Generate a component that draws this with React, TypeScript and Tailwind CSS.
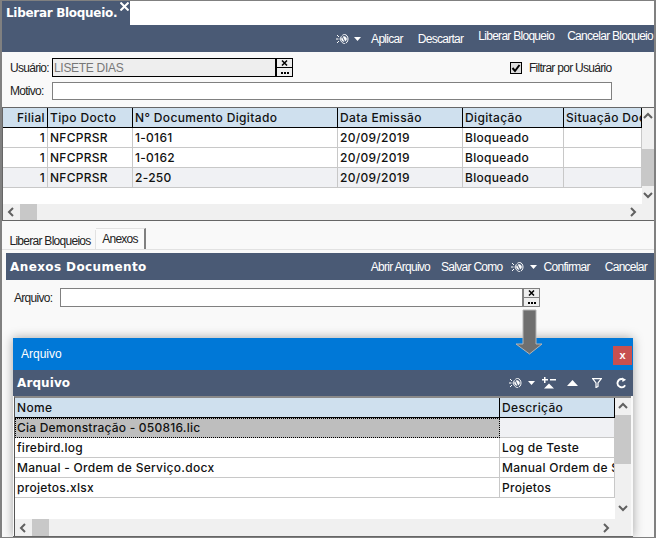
import type { ReactNode } from "react";

const SANS = "font-['Liberation_Sans',Arial,sans-serif]";
const TITLE = "font-['DejaVu_Sans',Verdana,sans-serif]";
const GRID = "font-['Inter',Verdana,sans-serif]";

function EyeIcon() {
  return (
    <svg width="13" height="12" viewBox="0 0 13 12" fill="none" stroke="white" strokeWidth="1">
      <path d="M0 6h2.500M1 2l2 2M1 10l2-2" />
      <path d="M4 6C5.500 2.500 7 1.500 8.500 1.500c2 0 3.500 2 3.500 4.500s-1.500 4.500-3.500 4.500C7 10.500 5.500 9.500 4 6z" />
      <circle cx="8" cy="6" r="2.300" fill="white" />
      <path d="M5 1l5 10" stroke="#4a5a75" />
    </svg>
  );
}

function Caret({ className = "" }: { className?: string }) {
  return (
    <svg width="7" height="4" viewBox="0 0 7 4" className={className}>
      <path d="M0 0h7L3.500 4z" fill="white" />
    </svg>
  );
}

function ToolText({ children, className = "" }: { children: ReactNode; className?: string }) {
  return <span className={`${SANS} text-[12px] tracking-[-0.72px] text-white whitespace-nowrap ${className}`}>{children}</span>;
}

function ClearButton({ border }: { border: string }) {
  return (
    <div className={`flex h-full w-[17px] shrink-0 flex-col border bg-[#eeeeee] ${border}`}>
      <div className={`flex h-1/2 items-center justify-center border-b ${border}`}>
        <svg width="7" height="6" viewBox="0 0 7 6" stroke="black" strokeWidth="1.500">
          <path d="M1 0.500l5 5M6 0.500l-5 5" />
        </svg>
      </div>
      <div className="flex flex-1 items-end justify-center gap-[1px] pb-[2px]">
        <i className="h-[2px] w-[2px] bg-black" />
        <i className="h-[2px] w-[2px] bg-black" />
        <i className="h-[2px] w-[2px] bg-black" />
      </div>
    </div>
  );
}

function Chevron({ dir }: { dir: "up" | "down" | "left" | "right" }) {
  const d = {
    up: "M1 6l4-4 4 4",
    down: "M1 2l4 4 4-4",
    left: "M6 1L2 5l4 4",
    right: "M3 1l4 4-4 4",
  }[dir];
  return (
    <svg width="10" height="10" viewBox="0 0 10 10" fill="none" stroke="#606060" strokeWidth="2">
      <path d={d} />
    </svg>
  );
}

const MAIN_COLS = "grid-cols-[45px_85px_205px_125px_101px_78px]";
const MAIN_HEAD = ["Filial", "Tipo Docto", "N° Documento Digitado", "Data Emissão", "Digitação", "Situação Docto"];
const MAIN_ROWS = [
  ["1", "NFCPRSR", "1-0161", "20/09/2019", "Bloqueado", ""],
  ["1", "NFCPRSR", "1-0162", "20/09/2019", "Bloqueado", ""],
  ["1", "NFCPRSR", "2-250", "20/09/2019", "Bloqueado", ""],
];

const FILE_ROWS = [
  ["firebird.log", "Log de Teste"],
  ["Manual - Ordem de Serviço.docx", "Manual Ordem de Serviço"],
  ["projetos.xlsx", "Projetos"],
];

function HeadCell({ children, right }: { children: ReactNode; right?: boolean }) {
  return (
    <div className={`${GRID} flex h-[20px] items-center overflow-hidden whitespace-nowrap border-r border-b border-r-black border-b-black bg-[#cfe0ee] px-[2px] text-[12px] font-medium tracking-[0.35px] text-[#111] ${right ? "justify-end" : ""}`}>
      {children}
    </div>
  );
}

function Cell({ children, right, className = "" }: { children?: ReactNode; right?: boolean; className?: string }) {
  return (
    <div className={`${GRID} flex h-[20px] items-center overflow-hidden whitespace-nowrap border-r border-b border-[#c8c8c8] px-[2px] text-[12px] font-medium tracking-[0.28px] text-[#111] ${right ? "justify-end" : ""} ${className}`}>
      {children}
    </div>
  );
}

export default function App() {
  return (
    <div className="relative flex h-[538px] w-[656px] flex-col overflow-hidden border-x-2 border-y border-x-[#808080] border-y-[#808080] bg-[#f9f9f9]">
      {/* aba superior */}
      <div className="flex h-[24px] shrink-0 bg-white">
        <div className={`${TITLE} relative flex w-[128px] items-center bg-[#4a5a75] pb-[1px] pl-[4px] text-[12px] font-bold tracking-[-0.3px] text-white`}>
          Liberar Bloqueio.
          <svg className="absolute right-[1px] top-[1px]" width="9" height="9" viewBox="0 0 9 9" stroke="white" strokeWidth="2">
            <path d="M0.500 0.500l8 8M8.500 0.500l-8 8" />
          </svg>
        </div>
      </div>
      <div className="flex h-[27px] shrink-0 items-center justify-end bg-[#4a5a75] pr-[1px]">
        <EyeIcon />
        <Caret className="ml-[5px]" />
        <ToolText className="ml-[10px] mt-[1px]">Aplicar</ToolText>
        <ToolText className="ml-[15px] mt-[1px]">Descartar</ToolText>
        <ToolText className="mb-[5px] ml-[15px]">Liberar Bloqueio</ToolText>
        <ToolText className="mb-[5px] ml-[13px]">Cancelar Bloqueio</ToolText>
      </div>

      {/* filtros */}
      <div className={`${SANS} flex h-[55px] shrink-0 flex-col text-[12px] tracking-[-0.72px] text-[#222]`}>
        <div className="mt-[6px] flex h-[19px] items-center">
          <span className="ml-[8px] w-[42px]">Usuário:</span>
          <div className="flex h-full w-[224px] items-center border border-black bg-[#eeeeee] pl-[1px] tracking-[-0.3px] text-[#777]">LISETE DIAS</div>
          <ClearButton border="border-black" />
          <div className="ml-[217px] flex h-[12px] w-[12px] items-center justify-center border border-black bg-[#dddddd]">
            <svg width="10" height="10" viewBox="0 0 10 10" fill="none" stroke="black" strokeWidth="2">
              <path d="M1.500 5l2.500 3 4.500-6" />
            </svg>
          </div>
          <span className="ml-[7px]">Filtrar por Usuário</span>
        </div>
        <div className="mt-[5px] flex h-[18px] items-center">
          <span className="ml-[8px] w-[42px]">Motivo:</span>
          <div className="h-full w-[560px] border border-[#808080] bg-white" />
        </div>
      </div>

      {/* grade de documentos */}
      <div className="flex h-[114px] shrink-0 flex-col border-y border-l border-y-[#666] border-l-[#666] bg-white">
        <div className="flex flex-1">
          <div className="w-[639px] overflow-hidden">
            <div className={`grid ${MAIN_COLS}`}>
              {MAIN_HEAD.map((h, i) => (
                <HeadCell key={h} right={i === 0}>{h}</HeadCell>
              ))}
              {MAIN_ROWS.map((row, r) =>
                row.map((c, i) => (
                  <Cell key={`${r}-${i}`} right={i === 0} className={r === 2 ? "bg-[#f0f1f4]" : ""}>{c}</Cell>
                )),
              )}
            </div>
          </div>
          <div className="flex flex-1 flex-col items-center bg-[#f0f0f0]">
            <div className="flex h-[41px] w-full justify-center pt-[4px]"><Chevron dir="up" /></div>
            <div className="h-[37px] w-full bg-[#c8c8c8]" />
            <div className="mt-auto mb-[3px]"><Chevron dir="down" /></div>
          </div>
        </div>
        <div className="flex h-[16px] shrink-0 items-center bg-[#f0f0f0]">
          <div className="ml-[4px] w-[12px]"><Chevron dir="left" /></div>
          <div className="ml-[1px] h-full w-[17px] bg-[#c8c8c8]" />
          <div className="ml-auto mr-[16px]"><Chevron dir="right" /></div>
        </div>
      </div>

      {/* abas */}
      <div className={`${SANS} flex h-[29px] shrink-0 items-end border-b border-[#e2e2e2] pl-[3px] text-[12px] tracking-[-0.72px] text-[#222]`}>
        <div className="flex h-[19px] w-[91px] items-center justify-center border-r border-[#e2e2e2] pt-[2px]">Liberar Bloqueios</div>
        <div className="flex h-[21px] w-[50px] items-center justify-center border-t border-r-2 border-t-[#e2e2e2] border-r-[#808080] bg-[#fbfbfb]">Anexos</div>
      </div>

      {/* anexos */}
      <div className="mt-[3px] ml-[4px] flex h-[27px] shrink-0 items-center bg-[#4a5a75] pr-[7px]">
        <span className={`${TITLE} ml-[4px] text-[12px] font-bold tracking-[0.4px] text-white`}>Anexos Documento</span>
        <ToolText className="ml-auto">Abrir Arquivo</ToolText>
        <ToolText className="ml-[11px]">Salvar Como</ToolText>
        <span className="ml-[8px] flex"><EyeIcon /></span>
        <Caret className="ml-[6px]" />
        <ToolText className="ml-[7px]">Confirmar</ToolText>
        <ToolText className="ml-[15px]">Cancelar</ToolText>
      </div>
      <div className={`${SANS} mt-[8px] flex h-[19px] shrink-0 items-center text-[12px] tracking-[-0.72px] text-[#222]`}>
        <span className="ml-[12px] w-[46px]">Arquivo:</span>
        <div className="h-full w-[463px] border border-[#808080] bg-white" />
        <ClearButton border="border-[#808080]" />
      </div>

      {/* dialogo sobreposto */}
      <div className="absolute left-[11px] top-[337px] flex h-[199px] w-[620px] flex-col border-b border-[#666] bg-[#f9f9f9] shadow-[0_0_10px_rgba(0,0,0,0.35)]">
        <div className={`${SANS} flex h-[32px] shrink-0 items-center bg-[#0078d7] pl-[8px] text-[12px] text-white`}>
          Arquivo
          <div className="ml-auto mr-[1px] mt-[3px] flex h-[19px] w-[19px] items-center justify-center bg-[#c75050] pb-[1px] text-[11px] font-bold">x</div>
        </div>
        <div className="flex h-[26px] shrink-0 items-center bg-[#4a5a75] pr-[6px]">
          <span className={`${TITLE} ml-[4px] text-[12px] font-bold tracking-[0.1px] text-white`}>Arquivo</span>
          <span className="ml-auto flex"><EyeIcon /></span>
          <Caret className="ml-[6px]" />
          <svg className="ml-[7px]" width="14" height="12" viewBox="0 0 14 12" fill="white">
            <path d="M2 0h1.500v2H6v1.500H3.500V6H2V3.500H0V2h2zM8 2h6v1.500H8zM7 6.500l5 5H2z" />
          </svg>
          <svg className="ml-[11px]" width="11" height="6" viewBox="0 0 11 6" fill="white">
            <path d="M5.500 0L11 6H0z" />
          </svg>
          <svg className="ml-[14px]" width="10" height="10" viewBox="0 0 10 10" fill="none" stroke="white" strokeWidth="1.200">
            <path d="M0.700 0.700h8.600L6 5v3.500l-2 1V5z" />
          </svg>
          <svg className="ml-[14px]" width="11" height="12" viewBox="0 0 12 12" fill="none" stroke="white" strokeWidth="2">
            <path d="M10 8.500A4.500 4.500 0 1 1 7 1.700" />
            <path d="M6.500 0L11 2.500 7 5z" fill="white" stroke="none" />
          </svg>
        </div>
        <div className="ml-[1px] mr-[2px] flex flex-1 flex-col border-l border-t-2 border-l-[#555] border-t-[#8a8a8a] bg-white">
          <div className="flex flex-1">
            <div className="w-[600px] overflow-hidden">
              <div className="grid grid-cols-[485px_115px]">
                <HeadCell>Nome</HeadCell>
                <HeadCell>Descrição</HeadCell>
                <div className={`${GRID} flex h-[20px] items-center border border-dotted border-black bg-[#bebebe] px-[1px] text-[12px] font-medium tracking-[0.22px] text-[#111]`}>
                  Cia Demonstração - 050816.lic
                </div>
                <Cell className="bg-[#f0f1f4]" />
                {FILE_ROWS.map((row) => row.map((c) => <Cell key={c}>{c}</Cell>))}
              </div>
            </div>
            <div className="flex flex-1 flex-col items-center bg-[#f0f0f0]">
              <div className="flex h-[17px] items-center"><Chevron dir="up" /></div>
              <div className="h-[49px] w-full bg-[#c8c8c8]" />
              <div className="mt-auto mb-[5px]"><Chevron dir="down" /></div>
            </div>
          </div>
          <div className="flex h-[17px] shrink-0 items-center bg-[#f0f0f0]">
            <div className="ml-[4px] w-[12px]"><Chevron dir="left" /></div>
            <div className="ml-[1px] h-full w-[17px] bg-[#c8c8c8]" />
            <div className="ml-auto mr-[20px]"><Chevron dir="right" /></div>
          </div>
        </div>
      </div>

      {/* seta indicativa */}
      <svg className="absolute left-[512px] top-[308px]" width="30" height="48" viewBox="0 0 30 48">
        <path d="M9 1h13v34h6L15.500 45 2 35h7z" fill="#6f6f6f" stroke="#b5b5b5" strokeWidth="1" />
      </svg>
    </div>
  );
}
